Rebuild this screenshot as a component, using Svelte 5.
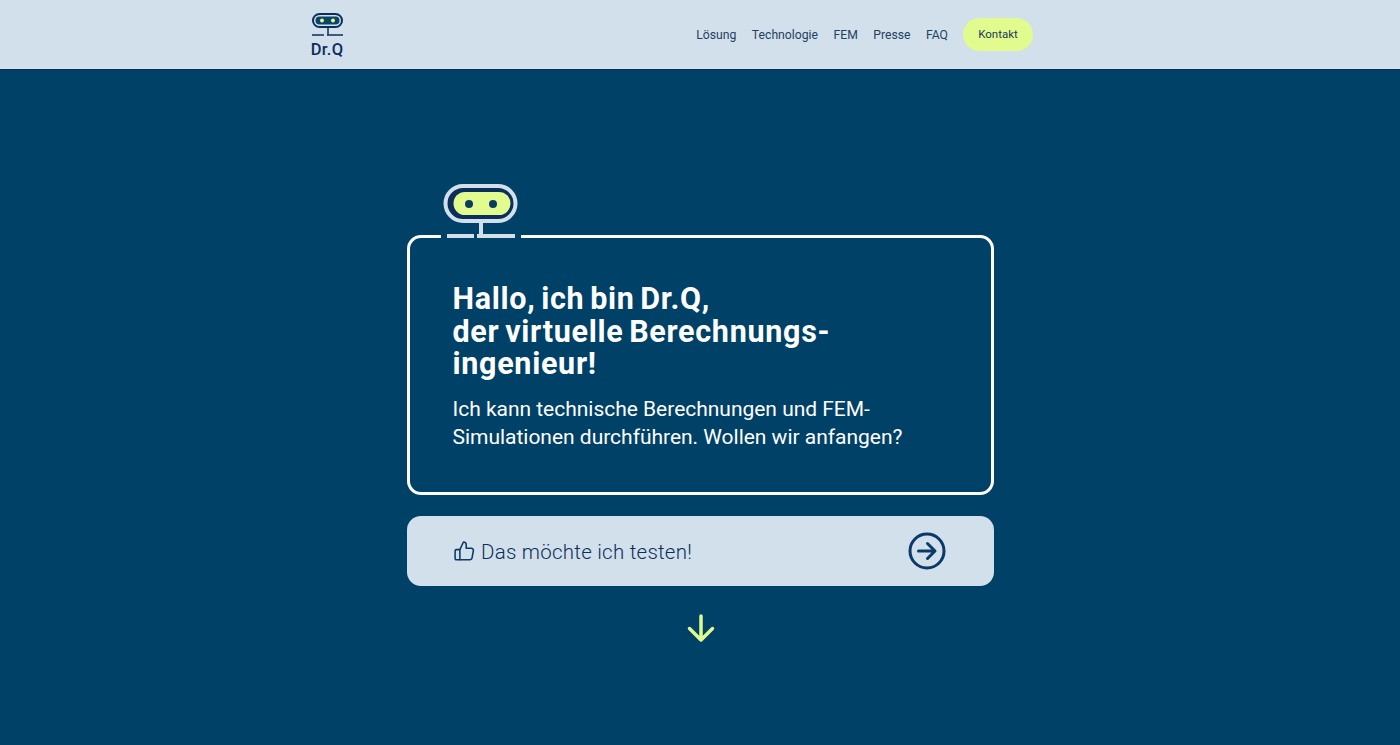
<script>
  const nav = ['Lösung', 'Technologie', 'FEM', 'Presse', 'FAQ'];
</script>

<div class="page">
  <header class="top">
    <div class="top-in">
      <a class="logo" href="#top">
        <svg width="34" height="26" viewBox="0 0 34 26" fill="none">
          <rect x="3" y="2" width="29" height="13" rx="6.5" stroke="#0b2f5a" stroke-width="2"/>
          <rect x="5.5" y="4.5" width="24" height="8" rx="4" fill="#0a4468"/>
          <circle cx="12" cy="8.5" r="2" fill="#e2fb8f"/>
          <circle cx="23" cy="8.5" r="2" fill="#e2fb8f"/>
          <path d="M18 16v7M2 23h12M17 23h16" stroke="#0b2f5a" stroke-width="1.5"/>
        </svg>
        <span>Dr.Q</span>
      </a>
      <nav>
        {#each nav as item}
          <a href="#top">{item}</a>
        {/each}
        <a class="cta" href="#top">Kontakt</a>
      </nav>
    </div>
  </header>

  <main>
    <section class="stack">
      <div class="card">
        <svg class="bot" width="90" height="60" viewBox="0 0 90 60" fill="none">
          <rect x="4" y="52" width="80" height="5" fill="#004168"/>
          <rect x="10.5" y="6" width="66" height="31" rx="15.5" fill="#0b2f5a"/>
          <rect x="8.5" y="4" width="70" height="35" rx="17.5" stroke="#d2e0eb" stroke-width="4"/>
          <rect x="16.5" y="10" width="57" height="23" rx="11.5" fill="#e2fb8f"/>
          <circle cx="32" cy="22" r="4" fill="#0a3a62"/>
          <circle cx="56" cy="22" r="4" fill="#0a3a62"/>
          <path d="M44 41v13M10 54h27M40 54h38" stroke="#d2e0eb" stroke-width="4"/>
        </svg>
        <h1>Hallo, ich bin Dr.Q,<br />der virtuelle Berechnungs-<br />ingenieur!</h1>
        <p>Ich kann technische Berechnungen und FEM-<br />Simulationen durchführen. Wollen wir anfangen?</p>
      </div>

      <a class="test" href="#top">
        <span class="label">
          <svg width="22" height="22" viewBox="0 0 24 24" fill="none" stroke="#0b3a68" stroke-width="1.7" stroke-linejoin="round" stroke-linecap="round">
            <path d="M7.5 10.5v11H3.6a1.3 1.3 0 0 1-1.3-1.3v-8.4a1.3 1.3 0 0 1 1.3-1.3z"/>
            <path d="M7.5 10.5l3.9-8.3c1.7 0 3 1.3 3 3v3.9h5.6a2.2 2.2 0 0 1 2.2 2.6l-1.4 7.9a2.2 2.2 0 0 1-2.2 1.9H7.5"/>
          </svg>
          <span class="label-text">Das möchte ich testen!</span>
        </span>
        <svg width="38" height="38" viewBox="0 0 38 38" fill="none" stroke="#0b3a68" stroke-width="3" stroke-linecap="round" stroke-linejoin="round">
          <circle cx="19" cy="19" r="17"/>
          <path d="M10.5 19h16M19.5 11.5l7.5 7.5-7.5 7.5"/>
        </svg>
      </a>

      <svg class="down" width="30" height="30" viewBox="0 0 30 30" fill="none" stroke="#e2fb8f" stroke-width="3.5" stroke-linecap="round" stroke-linejoin="round">
        <path d="M15 3v24M3.5 15.5L15 27l11.5-11.5"/>
      </svg>
    </section>
  </main>
</div>

<style>
  :global(body) {
    margin: 0;
    background: #004168;
  }
  .page {
    height: 745px;
    overflow: hidden;
    display: flex;
    flex-direction: column;
    font-family: Roboto, "Liberation Sans", sans-serif;
  }
  a {
    color: inherit;
    text-decoration: none;
  }
  .top {
    height: 69px;
    flex: none;
    background: #d2e0eb;
    border-bottom: 1px solid #0b2f5a;
    box-sizing: content-box;
  }
  .top-in {
    width: 723px;
    margin-left: 310px;
    height: 100%;
    display: flex;
    justify-content: space-between;
    align-items: center;
  }
  .logo {
    display: flex;
    flex-direction: column;
    align-items: center;
    color: #0b2f5a;
    font-size: 16.5px;
    font-weight: 500;
    line-height: 18px;
    letter-spacing: 0.3px;
    padding-top: 2px;
  }
  .logo svg {
    display: block;
    margin-bottom: 3px;
  }
  nav {
    display: flex;
    align-items: center;
    gap: 15.5px;
    font-size: 12.2px;
    color: #1f4262;
  }
  .cta {
    background: #e2fb8f;
    color: #1b3c58;
    font-size: 11.5px;
    height: 33px;
    line-height: 33px;
    width: 70px;
    text-align: center;
    border-radius: 17px;
    margin-left: -0.5px;
  }
  main {
    flex: 1;
  }
  .stack {
    width: 587px;
    margin: 165px 0 0 407px;
    display: flex;
    flex-direction: column;
    align-items: center;
  }
  .card {
    position: relative;
    align-self: stretch;
    box-sizing: border-box;
    height: 260px;
    border: 3px solid #fff;
    border-radius: 14px;
    padding: 45px 0 0 42.5px;
    color: #fff;
  }
  .bot {
    position: absolute;
    left: 27px;
    top: -56px;
  }
  h1 {
    margin: 0;
    font-size: 30.5px;
    line-height: 32.5px;
    font-weight: 700;
    letter-spacing: 0.7px;
    word-spacing: -2.5px;
  }
  p {
    margin: 14px 0 0;
    font-size: 21px;
    line-height: 28px;
    font-weight: 400;
    letter-spacing: -0.02px;
    white-space: nowrap;
  }
  .test {
    align-self: stretch;
    box-sizing: border-box;
    height: 70px;
    margin-top: 21px;
    background: #d2e0eb;
    border-radius: 14px;
    display: flex;
    align-items: center;
    justify-content: space-between;
    padding: 0 48px 0 46px;
    color: #0b2f5a;
    font-size: 20.5px;
    font-weight: 350;
    letter-spacing: 0.25px;
  }
  .label {
    display: flex;
    align-items: center;
    gap: 6px;
  }
  .label-text {
    padding-top: 2px;
  }
  .down {
    margin-top: 27px;
  }
</style>
